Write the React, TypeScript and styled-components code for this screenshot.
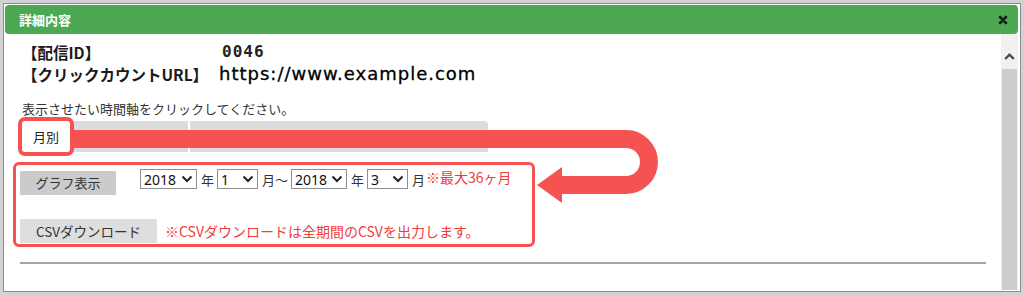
import React from "react";
import styled, { createGlobalStyle } from "styled-components";

const RED = "#f55252";

const GlobalStyle = createGlobalStyle`
  html, body { margin: 0; padding: 0; background: #fff; }
  body { font-family: "Noto Sans CJK JP", "Noto Sans", sans-serif; color: #222; }
  * { box-sizing: border-box; }
`;

const Page = styled.div`
  position: relative;
  width: 1024px;
  height: 295px;
  overflow: hidden;
`;

const Frame = styled.div`
  width: 100%;
  height: 100%;
  border: 3px solid #d2d2d2;
`;

const Inner = styled.div`
  height: 100%;
  border: 1px solid #8b8b8b;
  padding: 1px 2px 1px 1px;
  display: flex;
  flex-direction: column;
`;

const Header = styled.div`
  flex: none;
  height: 29px;
  background: #4ca853;
  border-radius: 4px;
  display: flex;
  align-items: center;
  justify-content: space-between;
  padding: 0 10px 0 14px;
`;

const Title = styled.h2`
  margin: 0;
  font-size: 13px;
  font-weight: 700;
  color: #fff;
  line-height: 1;
`;

const CloseButton = styled.span`
  display: flex;
  width: 10px;
  height: 10px;
`;

const Body = styled.div`
  flex: 1;
  display: flex;
  min-height: 0;
`;

const Main = styled.div`
  flex: 1;
  padding: 7px 15px 0 17px;
`;

const InfoGrid = styled.div`
  display: grid;
  grid-template-columns: 200px auto;
  grid-auto-rows: 22px;
  line-height: 22px;
`;

const Label = styled.div`
  font-size: 15.5px;
  font-weight: 700;
  color: #1a1a1a;
  white-space: nowrap;
`;

const IdValue = styled.div`
  font-family: "DejaVu Sans Mono", "Liberation Mono", monospace;
  font-size: 16px;
  font-weight: 700;
  letter-spacing: 1px;
  color: #222;
`;

const UrlValue = styled.div`
  font-family: "DejaVu Sans", "Noto Sans", sans-serif;
  font-size: 18px;
  letter-spacing: 1px;
  color: #000;
  margin-left: -3px;
  -webkit-text-stroke: 0.3px #000;
`;

const Instruction = styled.p`
  margin: 15px 0 0;
  font-size: 13px;
  line-height: 18px;
  color: #333;
`;

const TabBar = styled.div`
  margin-top: 3px;
  width: 466px;
  height: 31px;
  display: flex;
  gap: 2px;
  border-radius: 4px 4px 0 0;
`;

const Tab = styled.div<{ $active?: boolean; $width?: number }>`
  flex: ${(p) => (p.$width ? `0 0 ${p.$width}px` : "1")};
  background: ${(p) => (p.$active ? "#fff" : "#dcdcdc")};
  display: flex;
  align-items: center;
  justify-content: center;
  font-size: 13px;
  color: #222;
  border-radius: ${(p) => (p.$active ? "3px" : "0")};
  box-shadow: ${(p) => (p.$active ? `0 0 0 4px ${RED}` : "none")};
  position: relative;
  z-index: ${(p) => (p.$active ? 1 : 0)};
  &:last-child {
    border-top-right-radius: 4px;
  }
`;

const HighlightBox = styled.div`
  margin: 10px 0 0 -9px;
  width: 522px;
  height: 85px;
  border: 3px solid ${RED};
  border-radius: 6px;
  padding: 6px 0 0 4px;
  display: flex;
  flex-direction: column;
  gap: 24px;
`;

const ControlRow = styled.div`
  display: flex;
  align-items: flex-start;
`;

const GrayButton = styled.button<{ $tone: "dark" | "light"; $width: number }>`
  width: ${(p) => p.$width}px;
  height: 24px;
  padding: 0;
  border: none;
  background: ${(p) => (p.$tone === "dark" ? "#cbcbcb" : "#dedede")};
  font-family: inherit;
  font-size: ${(p) => (p.$tone === "dark" ? 13 : 13.5)}px;
  line-height: 24px;
  color: #333;
  text-align: center;
`;

const DateRange = styled.div`
  display: flex;
  align-items: center;
  margin: -2px 0 0 24px;
`;

const SelectBox = styled.div<{ $width: number }>`
  width: ${(p) => p.$width}px;
  height: 20px;
  border: 1px solid #8f8f8f;
  background: #fff;
  display: flex;
  align-items: center;
  justify-content: space-between;
  padding: 0 3px 0 3px;
  font-family: "Noto Sans", "DejaVu Sans", sans-serif;
  font-size: 14px;
  color: #111;
`;

const Unit = styled.span<{ $last?: boolean }>`
  font-size: 13px;
  color: #333;
  padding: ${(p) => (p.$last ? "0 0 0 4px" : "0 3px 0 4px")};
`;

const Note = styled.span<{ $inline?: boolean }>`
  color: #f03c3c;
  font-size: 14px;
  line-height: ${(p) => (p.$inline ? "16px" : "24px")};
  align-self: flex-start;
  margin-left: ${(p) => (p.$inline ? 1 : 8)}px;
`;

const Rule = styled.hr`
  margin: 15px 0 0 -2px;
  border: none;
  border-top: 2px solid #a5a5a5;
`;

const Scrollbar = styled.div`
  flex: 0 0 17px;
  background: #f1f1f1;
  display: flex;
  flex-direction: column;
`;

const ScrollArrow = styled.div`
  flex: 0 0 35px;
  display: flex;
  justify-content: center;
  padding-top: 19px;
`;

const ScrollThumb = styled.div`
  flex: 1;
  margin: 0 1px;
  background: #cdcdcd;
`;

const Overlay = styled.svg`
  position: absolute;
  left: 0;
  top: 0;
  width: 1024px;
  height: 295px;
  pointer-events: none;
`;

const Chevron = () => (
  <svg width="12" height="8" viewBox="0 0 12 8">
    <path d="M1.5 1.5 L6 6 L10.5 1.5" fill="none" stroke="#222" strokeWidth="2" />
  </svg>
);

const Select = ({ value, width }: { value: string; width: number }) => (
  <SelectBox $width={width}>
    <span>{value}</span>
    <Chevron />
  </SelectBox>
);

export default function App() {
  return (
    <>
      <GlobalStyle />
      <Page>
        <Frame>
          <Inner>
            <Header>
              <Title>詳細内容</Title>
              <CloseButton>
                <svg width="10" height="10" viewBox="0 0 10 10">
                  <path d="M2 2 L8 8 M8 2 L2 8" stroke="#1a1a1a" strokeWidth="2.6" strokeLinecap="round" />
                </svg>
              </CloseButton>
            </Header>
            <Body>
              <Main>
                <InfoGrid>
                  <Label>【配信ID】</Label>
                  <IdValue>0046</IdValue>
                  <Label>【クリックカウントURL】</Label>
                  <UrlValue>https://www.example.com</UrlValue>
                </InfoGrid>
                <Instruction>表示させたい時間軸をクリックしてください。</Instruction>
                <TabBar>
                  <Tab $active $width={48}>月別</Tab>
                  <Tab $width={116} />
                  <Tab />
                </TabBar>
                <HighlightBox>
                  <ControlRow>
                    <GrayButton $tone="dark" $width={96}>グラフ表示</GrayButton>
                    <DateRange>
                      <Select value="2018" width={57} />
                      <Unit>年</Unit>
                      <Select value="1" width={41} />
                      <Unit>月〜</Unit>
                      <Select value="2018" width={56} />
                      <Unit>年</Unit>
                      <Select value="3" width={41} />
                      <Unit $last>月</Unit>
                      <Note $inline>※最大36ヶ月</Note>
                    </DateRange>
                  </ControlRow>
                  <ControlRow>
                    <GrayButton $tone="light" $width={137}>CSVダウンロード</GrayButton>
                    <Note>※CSVダウンロードは全期間のCSVを出力します。</Note>
                  </ControlRow>
                </HighlightBox>
                <Rule />
              </Main>
              <Scrollbar>
                <ScrollArrow>
                  <svg width="11" height="7" viewBox="0 0 11 7">
                    <path d="M1.2 6 L5.5 1.7 L9.8 6" fill="none" stroke="#4a4a4a" strokeWidth="2.4" />
                  </svg>
                </ScrollArrow>
                <ScrollThumb />
              </Scrollbar>
            </Body>
          </Inner>
        </Frame>
        <Overlay viewBox="0 0 1024 295">
          <path
            d="M70 139 H626 A23 23 0 0 1 626 185 H556"
            fill="none"
            stroke={RED}
            strokeWidth="18"
          />
          <polygon points="537,185 562,167 562,203" fill={RED} />
        </Overlay>
      </Page>
    </>
  );
}
